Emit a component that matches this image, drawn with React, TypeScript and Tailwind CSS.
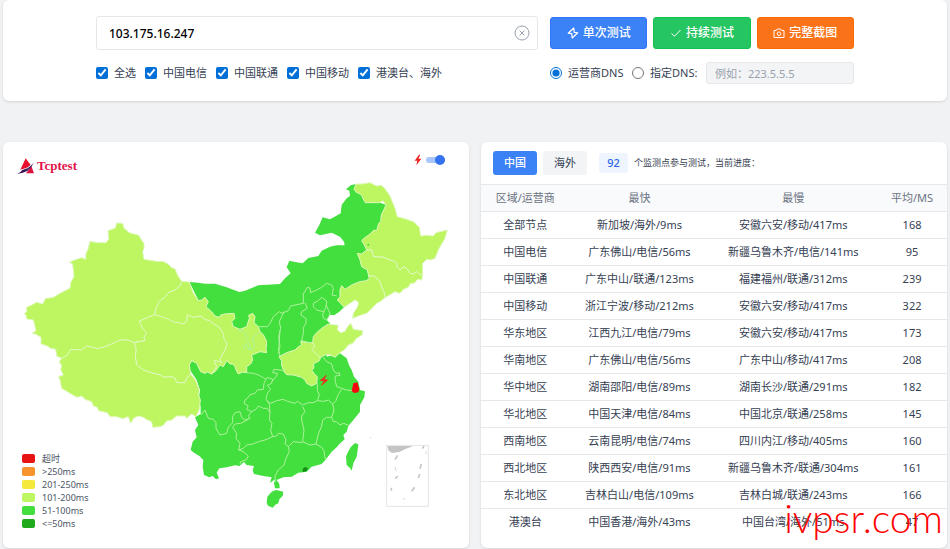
import React, { useState } from 'react';

const carriers = ['全选', '中国电信', '中国联通', '中国移动', '港澳台、海外'];

const rows = [
    ['全部节点', '新加坡/海外/9ms', '安徽六安/移动/417ms', 168],
    ['中国电信', '广东佛山/电信/56ms', '新疆乌鲁木齐/电信/141ms', 95],
    ['中国联通', '广东中山/联通/123ms', '福建福州/联通/312ms', 239],
    ['中国移动', '浙江宁波/移动/212ms', '安徽六安/移动/417ms', 322],
    ['华东地区', '江西九江/电信/79ms', '安徽六安/移动/417ms', 173],
    ['华南地区', '广东佛山/电信/56ms', '广东中山/移动/417ms', 208],
    ['华中地区', '湖南邵阳/电信/89ms', '湖南长沙/联通/291ms', 182],
    ['华北地区', '中国天津/电信/84ms', '中国北京/联通/258ms', 145],
    ['西南地区', '云南昆明/电信/74ms', '四川内江/移动/405ms', 160],
    ['西北地区', '陕西西安/电信/91ms', '新疆乌鲁木齐/联通/304ms', 161],
    ['东北地区', '吉林白山/电信/109ms', '吉林白城/联通/243ms', 166],
    ['港澳台', '中国香港/海外/43ms', '中国台湾/海外/51ms', 47],
];

const legend = [
    { label: '超时', color: 'bg-[#e81313]' },
    { label: '>250ms', color: 'bg-[#f7942f]' },
    { label: '201-250ms', color: 'bg-[#f5e93c]' },
    { label: '101-200ms', color: 'bg-[#bdf660]' },
    { label: '51-100ms', color: 'bg-[#42df3e]' },
    { label: '<=50ms', color: 'bg-[#1faa1b]' },
];

// west: Xinjiang, Qinghai, Tibet
const west = [
    '155,475 140,468 137,448 122,445 110,437 93,432 93,412 78,403 66,400 78,392 74,375 70,360 50,357 48,346 43,340 50,336 50,322 65,315 80,307 98,312 106,296 130,292 150,280 180,264 182,248 192,230 190,212 188,192 178,186 200,178 215,173 227,178 228,160 234,148 240,124 262,128 288,128 296,118 294,92 316,84 320,69 338,70 342,84 358,98 386,106 396,122 402,130 402,145 398,155 402,178 440,184 458,184 474,192 486,204 495,206 503,226 515,244 512,255 495,270 478,276 465,292 448,304 438,325 434,344 412,354 388,363 398,385 410,398 402,412 405,422 385,424 372,428 355,420 330,420 305,432 285,440 262,446 232,438 215,450 182,448 172,466',
    '434,344 450,346 465,353 480,358 490,365 510,367 522,372 530,362 532,344 550,352 572,348 585,358 600,362 612,372 628,382 640,400 642,415 652,432 645,450 638,462 630,478 636,488 628,486 612,480 620,500 605,522 592,516 585,520 572,515 560,490 545,482 538,495 542,522 530,535 525,548 500,548 494,534 485,530 462,532 448,524 430,520 400,510 380,495 376,470 378,445 372,428 405,422 402,412 410,398 398,385 388,363',
    '155,475 172,466 182,448 215,450 232,438 262,446 285,440 305,432 330,420 355,420 372,428 378,445 376,470 380,495 400,510 430,520 448,524 462,532 485,530 494,534 500,548 525,548 530,535 542,522 556,540 560,548 568,570 566,585 571,600 568,628 558,650 545,642 530,655 525,648 500,648 485,660 470,663 460,676 450,680 428,682 425,665 412,660 400,652 385,648 372,654 362,670 355,650 338,656 320,650 300,650 292,638 265,632 262,622 250,618 245,605 225,598 215,588 203,592 190,586 155,565 150,540 145,530 160,525 152,508 155,498 148,485',
];

// north: Gansu/Ningxia, Heilongjiang, Jilin, Liaoning
const north = [
    '5,334 28,336 38,365 55,392 65,390 75,382 85,395 78,410 95,425 105,438 118,442 122,435 135,432 162,430 165,445 155,455 160,470 180,478 200,470 208,445 206,436 218,430 225,440 222,458 235,470 240,485 250,494 260,515 258,540 260,548 240,545 228,550 215,555 218,570 212,582 200,590 200,608 188,606 175,612 168,600 165,590 158,582 150,582 140,572 130,590 120,585 108,602 95,612 110,590 102,570 126,578 120,568 128,552 135,540 142,522 132,505 130,490 118,472 102,462 90,452 75,448 62,438 40,442 22,434 20,452 12,462 -20,455 -45,443 -76,434 -72,415 -62,394 -45,382 -32,366 -15,360 2,345',
    '528,42 545,42 570,38 590,48 604,46 615,56 630,78 645,115 652,140 680,148 700,155 718,172 722,198 740,196 760,198 768,188 780,185 802,180 795,205 785,222 775,240 765,265 752,270 740,268 728,280 728,315 718,312 710,305 700,312 690,310 682,298 672,290 660,300 652,292 650,280 640,272 628,270 612,262 580,260 575,240 560,240 553,225 545,212 552,205 570,192 582,180 590,182 596,160 602,155 604,135 612,118 618,105 608,92 600,98 556,98 548,84 545,75 528,66 522,58',
    '560,240 575,240 580,260 612,262 628,270 640,272 650,280 652,292 660,300 672,290 682,298 690,310 700,312 710,305 718,312 728,315 725,330 712,328 705,338 690,342 685,352 670,358 660,370 645,365 630,374 615,383 612,365 605,352 600,335 588,322 580,318 566,318 562,300 545,290 540,270 532,250 545,252',
    '566,318 580,318 588,322 600,335 605,352 612,365 615,383 602,394 590,400 575,416 560,430 540,436 518,445 520,430 532,412 536,398 526,390 510,400 492,412 484,402 472,390 480,380 480,360 485,347 495,358 515,345 540,335 560,332 568,325',
];

// Henan, Shandong
const central = [
    '297,50 320,38 345,30 355,20 365,15 362,4 385,8 398,8 405,18 395,28 412,45 422,52 418,62 400,72 402,84 395,90 405,104 412,110 410,130 395,138 380,130 375,120 365,112 340,105 320,104 312,95 305,75 305,62',
    '398,8 400,-10 410,-22 425,-35 445,-48 460,-46 475,-44 472,-30 482,-22 495,-26 504,-42 513,-50 520,-32 548,-28 546,-15 530,-5 518,10 505,15 495,28 480,38 465,52 450,44 435,45 420,52 412,45 395,28 405,18',
];

const greenNorth = '28,336 55,338 75,341 105,341 140,352 178,366 195,362 235,346 300,342 315,325 332,310 320,292 328,272 345,276 368,280 385,264 415,258 425,242 450,230 470,226 494,226 492,215 480,200 455,188 438,192 420,196 405,188 418,165 428,142 450,148 468,138 482,130 485,105 500,85 510,78 508,62 498,58 512,46 528,42 600,98 620,105 590,200 560,250 570,325 500,370 492,412 478,425 462,436 450,434 440,450 450,460 440,560 480,550 500,565 508,588 515,600 522,620 535,635 540,660 555,664 553,682 540,705 540,725 520,750 505,768 500,785 490,795 494,808 478,822 470,832 455,845 438,868 425,882 395,890 380,905 355,908 335,920 310,922 290,930 298,942 299,955 285,955 282,940 286,928 270,938 275,922 250,918 222,912 218,900 222,888 200,885 192,876 178,888 165,886 140,892 118,895 110,908 117,925 108,928 98,918 88,922 72,915 68,890 70,870 58,858 42,848 32,840 38,815 50,802 45,780 55,765 45,742 62,732 62,710 55,690 60,660 50,630 30,600 28,582 35,574 130,540';

const northLines = [
    '235,470 262,470 270,460 280,440 298,425 305,430 325,422 332,408 345,405 370,400 370,372 382,352 390,354 392,368 410,360 425,352 440,340 455,345 460,355 456,375 470,378',
    '312,425 298,455 302,475 296,500 300,530 294,550',
    '375,398 382,415 365,425 362,435 378,445 378,460 370,472 370,490 365,512 390,518',
    '400,400 415,392 425,382 440,393 438,412 430,425 410,420 400,410 400,400',
    '438,405 450,430 446,440 440,450 430,444 428,432 434,424',
    '175,484 190,482 197,490 198,505 210,522 208,535 218,538 224,522 218,510 220,500 236,488',
    '190,540 198,520 205,538 218,538',
];

const southLines = [
    '200,98 220,100 235,105 248,112 258,118 252,130 250,148 232,150 225,160 210,164 205,172 195,180 192,190 205,198 200,208 215,215 205,228 210,235 195,240 185,232 180,215 165,218 158,230 158,248 145,262 140,280 120,285 108,265 108,248 100,238 85,235 75,210 62,225',
    '258,118 262,112 278,118 275,130 262,136 272,148 262,160 258,178 268,192 270,218 262,205 250,205 235,198 228,208 215,215',
    '275,125 290,108 292,100 278,98 282,88 315,92',
    '260,182 272,190 290,182 310,178 322,184 345,190 352,184 368,195 385,188 400,188 412,182',
    '412,182 418,165 412,152 412,130',
    '428,50 440,65 455,72 460,90 468,100 478,98 480,106 466,108 465,120 470,140 485,145 500,150 518,152',
    '412,182 430,184 445,180 458,192 468,182 474,165 485,148',
    '368,200 375,215 365,228 365,240 372,270 368,305 390,315 408,312 415,282 425,258 428,240 440,232 455,232 462,210 458,192',
    '455,232 460,245 470,245 480,255 490,250 505,255',
    '408,312 425,322 432,332 434,350 438,358',
    '270,218 268,240 276,250 272,270 278,290 290,288 295,280 310,282 318,300 315,312 325,320 340,305 368,308',
    '205,238 182,250 165,252 158,262 170,280 168,295 180,310 176,330 190,325 200,315 218,312 235,305 255,300 278,290',
    '176,330 190,335 205,348 198,360 182,365 180,372',
    '325,320 328,335 318,355 312,375 295,390 285,408 286,425',
    '300,-30 296,30 300,50',
];

const Bolt = ({ className }: { className?: string }) => (
    <svg viewBox="0 0 24 32" className={className} fill="currentColor">
        <path d="M15 0 2 18h8L7 32 22 12h-9l6-12z" />
    </svg>
);

const ChinaMap = () => (
    <svg viewBox="-531 24 1398 1110" className="w-full h-auto" role="img" aria-label="中国">
        <polygon points={greenNorth} fill="#42df3e" />
        <g stroke="#dff9bd" strokeWidth="3" fill="#bdf660" strokeLinejoin="round">
            <g transform="translate(-510 90)">
                {west.map((p, i) => <polygon key={i} points={p} />)}
            </g>
            {north.map((p, i) => <polygon key={i} points={p} />)}
            <g transform="translate(0 510)">
                {central.map((p, i) => <polygon key={i} points={p} />)}
            </g>
        </g>
        <g stroke="#aef29a" strokeWidth="3" fill="none" strokeLinejoin="round">
            {northLines.map((p, i) => <polyline key={i} points={p} />)}
            <g transform="translate(0 510)">
                {southLines.map((p, i) => <polyline key={i} points={p} />)}
            </g>
        </g>
        <circle cx="565" cy="224" r="3" fill="#42df3e" />
        <g transform="translate(0 510)">
            {/* Hainan and Taiwan */}
            <polygon points="275,455 288,450 298,452 310,455 308,468 298,478 295,490 286,494 278,503 264,497 260,488 262,470" fill="#42df3e" />
            <polygon points="525,309 535,313 533,330 530,350 520,370 515,392 510,384 500,375 498,350 505,334 512,322" fill="#42df3e" />
            <path d="M368 386l8-5 8 4-4 8-12 4z" fill="#178c18" />
            <path d="M520 130l12-3 6 20-3 10-12 2-8-5z" fill="#f5070f" />
            <path d="M438 106 419 122l12 2-8 12h3l19-17-12-2 8-11z" fill="#ee2b24" />
            {/* islands inset */}
            <rect x="620" y="316" width="125" height="183" fill="none" stroke="#e5e5e5" strokeWidth="3" />
            <path d="M622 318h78l-22 8-20 10-22 3-10-7z" fill="#c4c4c4" />
            <g stroke="#c6c6c6" strokeWidth="5" fill="none">
                <path d="M653 346l-8 13M732 318l-5 8M724 372l-4 14M719 402l-4 12M704 442l-9 12M653 408l-7 8M634 443v9" />
                <path d="M645 380l4 14M668 475l8 3M738 334v8" strokeWidth="2" />
            </g>
            <path d="M569 293h5" stroke="#ccc" strokeWidth="2" />
        </g>
    </svg>
);

const App = () => {
    const [on, setOn] = useState(true);

    return (
        <div className="min-h-screen bg-[#f1f2f4] px-[3px] text-[11px] leading-4 text-gray-700 font-['Noto_Sans','Noto_Sans_CJK_SC',sans-serif]">
            <section className="rounded-md bg-white px-3 pt-4 pb-[17px] shadow">
                <form className="mx-auto max-w-[758px]" onSubmit={(e) => e.preventDefault()}>
                    <div className="flex items-center gap-3">
                        <div className="relative flex-1">
                            <input aria-label="IP" defaultValue="103.175.16.247" className="h-[34px] w-full rounded-[3px] border border-gray-200 px-3 text-xs font-medium text-black outline-none" />
                            <button type="button" aria-label="清空" className="absolute right-2 top-1/2 -translate-y-1/2 text-gray-400">
                                <svg viewBox="0 0 16 16" className="size-4" fill="none" stroke="currentColor">
                                    <circle cx="8" cy="8" r="7" />
                                    <path d="M5.5 5.5l5 5M10.5 5.5l-5 5" />
                                </svg>
                            </button>
                        </div>
                        <div className="grid w-[304px] grid-cols-3 gap-1.5 text-xs font-medium text-white">
                            <button className="flex h-8 items-center justify-center gap-1 rounded-[3px] border border-[#2f74fb] bg-[#3b82f6]">
                                <svg viewBox="0 0 12 12" className="size-3" fill="none" stroke="currentColor" strokeWidth="1.2" strokeLinejoin="round">
                                    <path d="M6.8 1 1.2 6.2l3.6.4L5.2 11l5.6-5.2-3.6-.4z" />
                                </svg>
                                单次测试
                            </button>
                            <button type="button" className="flex h-8 items-center justify-center gap-1 rounded-[3px] border border-[#12c44e] bg-[#25c562]">
                                <svg viewBox="0 0 12 12" className="size-3" fill="none" stroke="currentColor">
                                    <path d="M1.5 6.5 4.5 9.2 10.5 3" />
                                </svg>
                                持续测试
                            </button>
                            <button type="button" className="flex h-8 items-center justify-center gap-1 rounded-[3px] border border-[#ff6a00] bg-[#fa7319]">
                                <svg viewBox="0 0 12 12" className="size-3" fill="none" stroke="currentColor" strokeLinejoin="round">
                                    <path d="M1 3.5h2.2L4.3 2h3.4l1.1 1.5H11v7H1z" />
                                    <circle cx="6" cy="6.7" r="1.8" />
                                </svg>
                                完整截图
                            </button>
                        </div>
                    </div>
                    <div className="mt-3 flex items-center gap-3">
                        <div className="flex flex-1 items-center gap-[9px]">
                            {carriers.map((name) => (
                                <label key={name} className="flex items-center gap-1.5 whitespace-nowrap">
                                    <input type="checkbox" defaultChecked className="size-3 accent-[#0070d8]" />
                                    {name}
                                </label>
                            ))}
                        </div>
                        <div className="flex w-[304px] items-center justify-between whitespace-nowrap">
                            <label className="flex items-center gap-1.5">
                                <input type="radio" name="dns" defaultChecked className="size-3 accent-[#0070d8]" />
                                运营商DNS
                            </label>
                            <label className="flex items-center gap-1.5">
                                <input type="radio" name="dns" className="size-3 accent-[#0070d8]" />
                                指定DNS:
                            </label>
                            <input aria-label="DNS" placeholder="例如：223.5.5.5" className="h-[22px] w-[148px] rounded-[3px] border border-gray-200 bg-gray-100 px-2 placeholder:text-gray-400" />
                        </div>
                    </div>
                </form>
            </section>

            <main className="mt-[41px] grid grid-cols-2 gap-3">
                <section className="relative rounded-md bg-white shadow">
                    <div className="flex h-9 items-start justify-between pl-3.5 pr-6 pt-3">
                        <div className="flex items-center gap-[3px] pt-1">
                            <svg viewBox="0 0 51 48" className="h-4 w-[17px]">
                                <path d="M26 1 41 21Q25 35 10 35z" fill="#e8102d" />
                                <path d="M43 24 51 46H27Q35 36 43 24z" fill="#dc1440" />
                                <path d="M0 47Q12 44 16 35 36 31 51 13 38 46 0 47z" fill="#3a1558" />
                                <path d="M12 36Q34 34 51 14" stroke="#fff" strokeWidth="2" fill="none" />
                            </svg>
                            <span className="font-['Liberation_Serif',serif] text-[13px] font-bold leading-4 text-[#e2134a]">Tcptest</span>
                        </div>
                        <div className="flex items-center gap-1">
                            <Bolt className="h-3 w-2 text-[#f0201c]" />
                            <button type="button" role="switch" aria-label="动画" aria-checked={on} onClick={() => setOn(!on)} className="flex h-3 w-[19px] items-center">
                                <span className={'flex h-1.5 w-full items-center rounded-full bg-[#a9c6fa] ' + (on ? 'justify-end' : 'justify-start')}>
                                    <span className="size-2.5 rounded-full bg-[#3572ee]" />
                                </span>
                            </button>
                        </div>
                    </div>
                    <ChinaMap />
                    <ul className="absolute bottom-[18px] left-[19px] text-[9px] leading-[13px] text-gray-600">
                        {legend.map((item) => (
                            <li key={item.label} className="flex items-center gap-[7px]">
                                <span className={'h-[9px] w-[13px] rounded-[2px] ' + item.color} />
                                {item.label}
                            </li>
                        ))}
                    </ul>
                </section>

                <section className="relative rounded-md bg-white shadow">
                    <div className="flex h-[42px] items-center px-3">
                        <button type="button" className="h-6 w-11 rounded-[3px] bg-[#3b82f6] font-medium text-white">中国</button>
                        <button type="button" className="ml-1.5 h-6 w-11 rounded-[3px] bg-gray-100">海外</button>
                        <span className="ml-3 w-[29px] rounded-[3px] bg-[#eef5ff] py-0.5 text-center font-medium text-[#2f66e8]">92</span>
                        <span className="ml-1.5 text-[9px]">个监测点参与测试，当前进度：</span>
                    </div>
                    <table className="w-full table-fixed text-center">
                        <thead>
                            <tr className="h-[27px] border-y border-gray-200 bg-gray-50 text-gray-500">
                                <th className="w-[19%] font-normal">区域/运营商</th>
                                <th className="w-[30%] font-normal">最快</th>
                                <th className="w-[36%] font-normal">最慢</th>
                                <th className="w-[15%] font-normal">平均/MS</th>
                            </tr>
                        </thead>
                        <tbody>
                            {rows.map((row) => (
                                <tr key={row[0]} className="h-[27px] border-b border-gray-200 last:border-b-0">
                                    {row.map((cell, i) => <td key={i}>{cell}</td>)}
                                </tr>
                            ))}
                        </tbody>
                    </table>
                    <span className="absolute bottom-2 right-1 font-['Lato',sans-serif] text-[39px] font-light leading-[44px] text-[#ff0000]">ivpsr.com</span>
                </section>
            </main>
        </div>
    );
};

export default App;
